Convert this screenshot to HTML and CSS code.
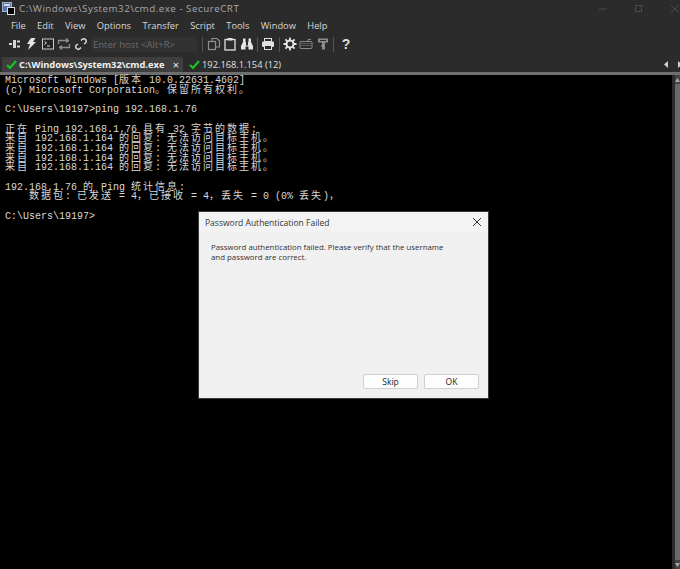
FILE: index.html
```html
<!DOCTYPE html>
<html lang="en">
<head>
<meta charset="utf-8">
<title>SecureCRT</title>
<link rel="stylesheet" href="styles.css">
</head>
<body>
<div class="app">
  <header class="titlebar">
    <svg class="appicon" width="13" height="13" viewBox="0 0 13 13"><rect x="0.5" y="0.5" width="9" height="9" fill="#5a78a8" stroke="#9fb4d6"/><rect x="2" y="2" width="6" height="2" fill="#cfd9ea"/><rect x="5.500" y="5.500" width="7" height="7" fill="#000" stroke="#ddd"/></svg>
    <span class="title">C:\Windows\System32\cmd.exe - SecureCRT</span>
    <div class="winctl">
      <svg width="10" height="10" viewBox="0 0 10 10"><path d="M1 5h8" stroke="#4b4b4b"/></svg>
      <svg width="10" height="10" viewBox="0 0 10 10"><rect x="1.500" y="1.500" width="6" height="6" fill="none" stroke="#4b4b4b"/></svg>
      <svg width="10" height="10" viewBox="0 0 10 10"><path d="M1 1l8 8M9 1l-8 8" stroke="#4b4b4b"/></svg>
    </div>
  </header>
  <nav class="menubar">
    <span>File</span><span>Edit</span><span>View</span><span>Options</span><span>Transfer</span><span>Script</span><span>Tools</span><span>Window</span><span>Help</span>
  </nav>
  <div class="toolbar">
    <svg class="ic" width="14" height="14" viewBox="0 0 14 14"><path d="M1 6h3v2H1zM5 3h3v8H5zM9 3.500h3v2H9zM9 8.500h3v2H9z" fill="#d4d4d4"/></svg>
    <svg class="ic" width="14" height="14" viewBox="0 0 14 14"><path d="M7 1h4.500L9 5h3L4 13l2-6H3z" fill="#e4e4e4"/></svg>
    <svg class="ic" width="14" height="14" viewBox="0 0 14 14"><rect x="1.500" y="2" width="11" height="10" fill="#222" stroke="#cfcfcf"/><path d="M3.500 4.500l2 1.500-2 1.500M6 9h3" stroke="#e0e0e0" fill="none"/></svg>
    <svg class="ic" width="14" height="14" viewBox="0 0 14 14"><path d="M1.500 7V3.500h9M9 1.500l2.500 2-2.500 2M12.500 7v3.500h-9M5 8.500l-2.500 2 2.500 2" stroke="#8f8f8f" stroke-width="1.300" fill="none"/></svg>
    <svg class="ic" width="14" height="14" viewBox="0 0 14 14"><path d="M7 3.500l1-1a2.300 2.300 0 0 1 3.500 3.500l-1.500 1M7 10.500l-1 1A2.300 2.300 0 0 1 2.500 8l1.500-1" stroke="#dcdcdc" stroke-width="1.500" fill="none"/></svg>
    <input class="host" type="text" placeholder="Enter host <Alt+R>">
    <i class="sep first"></i>
    <svg class="ic" width="14" height="14" viewBox="0 0 14 14"><rect x="1.500" y="4.500" width="7" height="8" fill="none" stroke="#8f8f8f" stroke-width="1.200"/><path d="M5 4V1.500h5l2.500 2.500v6H9" fill="none" stroke="#8f8f8f" stroke-width="1.200"/></svg>
    <svg class="ic" width="14" height="14" viewBox="0 0 14 14"><rect x="2" y="2.500" width="10" height="10.500" fill="none" stroke="#e0e0e0" stroke-width="1.300"/><rect x="4.500" y="1" width="5" height="2.500" fill="#e0e0e0"/></svg>
    <svg class="ic" width="14" height="14" viewBox="0 0 14 14"><path d="M3 1.500h2.500V5H6v3.500h2V5h.5V1.500H11V5l2 4v3.500H8.500V9.500h-3v3H1V9l2-4z" fill="#e4e4e4"/></svg>
    <i class="sep"></i>
    <svg class="ic" width="14" height="14" viewBox="0 0 14 14"><rect x="3.500" y="1.500" width="7" height="3" fill="none" stroke="#e0e0e0"/><rect x="1" y="4.500" width="12" height="5.500" rx="1" fill="#e0e0e0"/><rect x="3.500" y="8.500" width="7" height="4" fill="#2b2b2b" stroke="#e0e0e0"/></svg>
    <i class="sep"></i>
    <svg class="ic" width="14" height="14" viewBox="0 0 14 14"><circle cx="7" cy="7" r="3.500" fill="none" stroke="#e4e4e4" stroke-width="2"/><path d="M7 .5v3M7 10.500v3M.5 7h3M10.500 7h3M2.400 2.400l2 2M9.600 9.600l2 2M11.600 2.400l-2 2M4.400 9.600l-2 2" stroke="#e4e4e4" stroke-width="1.800"/></svg>
    <svg class="ic" width="14" height="14" viewBox="0 0 14 14"><rect x="1" y="4.500" width="12" height="7" rx="1" fill="none" stroke="#8c8c8c"/><path d="M2.500 6.500h9M2.500 8.500h9" stroke="#8c8c8c" stroke-dasharray="1 1"/><path d="M9 4.500V2.500h3" stroke="#8c8c8c" fill="none"/></svg>
    <svg class="ic" width="14" height="14" viewBox="0 0 14 14"><path d="M2 1.500h10v4H9v7H6v-3H5V8h1V5.500H2z" fill="#8c8c8c"/><rect x="4" y="3" width="6" height="1" fill="#2b2b2b"/></svg>
    <i class="sep"></i>
    <span class="help">?</span>
  </div>
  <div class="tabs">
    <div class="tab active">
      <svg width="11" height="10" viewBox="0 0 11 10"><path d="M1 5l3 3 6-7" stroke="#16c21f" stroke-width="2.200" fill="none"/></svg>
      <span>C:\Windows\System32\cmd.exe</span>
      <b class="close">×</b>
    </div>
    <div class="tab">
      <svg width="11" height="10" viewBox="0 0 11 10"><path d="M1 5l3 3 6-7" stroke="#16c21f" stroke-width="2.200" fill="none"/></svg>
      <span>192.168.1.154 (12)</span>
    </div>
    <div class="tabnav">
      <svg width="5" height="7" viewBox="0 0 5 7"><path d="M4 0v7L0 3.500z" fill="#d0d0d0"/></svg>
      <svg width="5" height="7" viewBox="0 0 5 7"><path d="M1 0v7l4-3.500z" fill="#d0d0d0"/></svg>
    </div>
  </div>
  <main class="workspace">
    <div class="terminal">
      <div class="line">Microsoft Windows [<span class="zh">版本</span> 10.0.22631.4602]</div>
      <div class="line">(c) Microsoft Corporation<span class="zh">。保留所有权利。</span></div>
      <div class="line"></div>
      <div class="line">C:\Users\19197&gt;ping 192.168.1.76</div>
      <div class="line"></div>
      <div class="line"><span class="zh">正在</span> Ping 192.168.1.76 <span class="zh">具有</span> 32 <span class="zh">字节的数据</span>:</div>
      <div class="line"><span class="zh">来自</span> 192.168.1.164 <span class="zh">的回复</span>: <span class="zh">无法访问目标主机。</span></div>
      <div class="line"><span class="zh">来自</span> 192.168.1.164 <span class="zh">的回复</span>: <span class="zh">无法访问目标主机。</span></div>
      <div class="line"><span class="zh">来自</span> 192.168.1.164 <span class="zh">的回复</span>: <span class="zh">无法访问目标主机。</span></div>
      <div class="line"><span class="zh">来自</span> 192.168.1.164 <span class="zh">的回复</span>: <span class="zh">无法访问目标主机。</span></div>
      <div class="line"></div>
      <div class="line">192.168.1.76 <span class="zh">的</span> Ping <span class="zh">统计信息</span>:</div>
      <div class="line">    <span class="zh">数据包</span>: <span class="zh">已发送</span> = 4<span class="zh">，已接收</span> = 4<span class="zh">，丢失</span> = 0 (0% <span class="zh">丢失</span>)<span class="zh">，</span></div>
      <div class="line"></div>
      <div class="line">C:\Users\19197&gt;</div>
    </div>
    <aside class="scrollbar">
      <div class="sb-btn"><svg width="5" height="4" viewBox="0 0 5 4"><path d="M2.500 0L5 4H0z" fill="#a8a8a8"/></svg></div>
      <div class="sb-thumb"></div>
      <div class="sb-btn"><svg width="5" height="4" viewBox="0 0 5 4"><path d="M0 0h5L2.500 4z" fill="#a8a8a8"/></svg></div>
    </aside>
    <section class="dialog">
      <div class="dialog-head">
        <span>Password Authentication Failed</span>
        <svg width="10" height="10" viewBox="0 0 10 10"><path d="M1 1l8 8M9 1l-8 8" stroke="#333" stroke-width="1"/></svg>
      </div>
      <div class="dialog-body">
        <p>Password authentication failed. Please verify that the username<br>and password are correct.</p>
        <div class="actions"><button>Skip</button><button>OK</button></div>
      </div>
    </section>
  </main>
</div>
</body>
</html>
```
FILE: styles.css
```css
* { box-sizing: border-box; }
html, body { margin: 0; padding: 0; height: 100%; }
body { background: #000; font-family: "Open Sans", "Liberation Sans", sans-serif; overflow: hidden; }
.app { width: 680px; height: 569px; display: flex; flex-direction: column; background: #2b2b2b; overflow: hidden; }
.titlebar { height: 15px; flex: none; display: flex; align-items: center; padding-left: 2px; margin-top: 1px; color: #a8a8a8; }
.appicon { flex: none; }
.title { margin-left: 4px; font-size: 9.800px; letter-spacing: .5px; }
.winctl { margin-left: auto; display: flex; gap: 26px; }
.menubar { height: 17px; flex: none; display: flex; align-items: center; padding: 2px 0 0 11px; gap: 11.400px; color: #d8d8d8; font-size: 9.300px; }
.toolbar { height: 22px; flex: none; display: flex; align-items: center; padding-left: 8px; gap: 2.400px; }
.ic { flex: none; }
.host { width: 107px; height: 15px; margin-left: 1px; background: #313131; border: 0; padding: 0 2px; font-family: "Open Sans", sans-serif; font-size: 9.500px; outline: 0; flex: none; }
.host::placeholder { color: #6c6c6c; }
.sep { width: 1px; height: 15px; background: #555; margin: 0 1px; flex: none; }
.sep.first { margin-left: 2px; margin-right: 1px; }
.help { color: #ddd; font-family: "Liberation Sans", sans-serif; font-weight: 700; font-size: 14px; margin-left: 4px; }
.tabs { height: 15px; flex: none; display: flex; align-items: stretch; padding-left: 2px; margin-top: 2px; color: #e0e0e0; font-size: 9.300px; }
.tab { display: flex; align-items: center; gap: 2px; padding: 0 4px; }
.tab.active { width: 181px; background: #3e3e3e; font-weight: 700; color: #f2f2f2; }
.tab:not(.active) { padding-left: 6px; }
.close { margin-left: auto; font-size: 11px; font-weight: 400; }
.tabnav { margin-left: auto; margin-right: -2px; display: flex; align-items: center; gap: 8px; }
.workspace { flex: 1; min-height: 0; position: relative; display: flex; border-top: 3px solid #6f6f6f; background: #000; }
.terminal { flex: 1; min-width: 0; padding: 1px 0 0 5px; color: #d8d8d8; font-family: "Liberation Mono", "Noto Sans CJK SC", monospace; font-size: 10px; line-height: 9.710px; }
.line { width: fit-content; height: 9.710px; white-space: pre; }
.zh { font-family: "Noto Sans CJK SC", sans-serif; font-size: 10px; letter-spacing: 2px; line-height: 0; }
.scrollbar { width: 8px; flex: none; display: flex; flex-direction: column; background: #2b2b2b; padding-left: 3px; }
.sb-btn { height: 9px; flex: none; display: flex; align-items: center; justify-content: center; background: #444; }
.sb-thumb { flex: 1; background: #6a6a6a; }
.dialog { position: absolute; left: 198px; top: 136px; width: 291px; height: 188px; background: #f0f0f0; border: 1px solid #3a3a3a; color: #222; display: flex; flex-direction: column; }
.dialog-head { height: 20px; flex: none; display: flex; align-items: center; justify-content: space-between; padding: 0 6px; font-size: 8.500px; background: #f3f3f3; color: #333; }
.dialog-body { flex: 1; display: flex; flex-direction: column; padding: 10px 9px 9px 12px; }
.dialog-body p { margin: 0; font-size: 7.850px; line-height: 10px; color: #333; }
.actions { margin-top: auto; display: flex; justify-content: flex-end; gap: 6px; }
.actions button { width: 55px; height: 15px; padding: 0; background: #fdfdfd; border: 1px solid #d0d0d0; border-radius: 2px; font-family: "Open Sans", sans-serif; font-size: 8.500px; color: #222; }
```
